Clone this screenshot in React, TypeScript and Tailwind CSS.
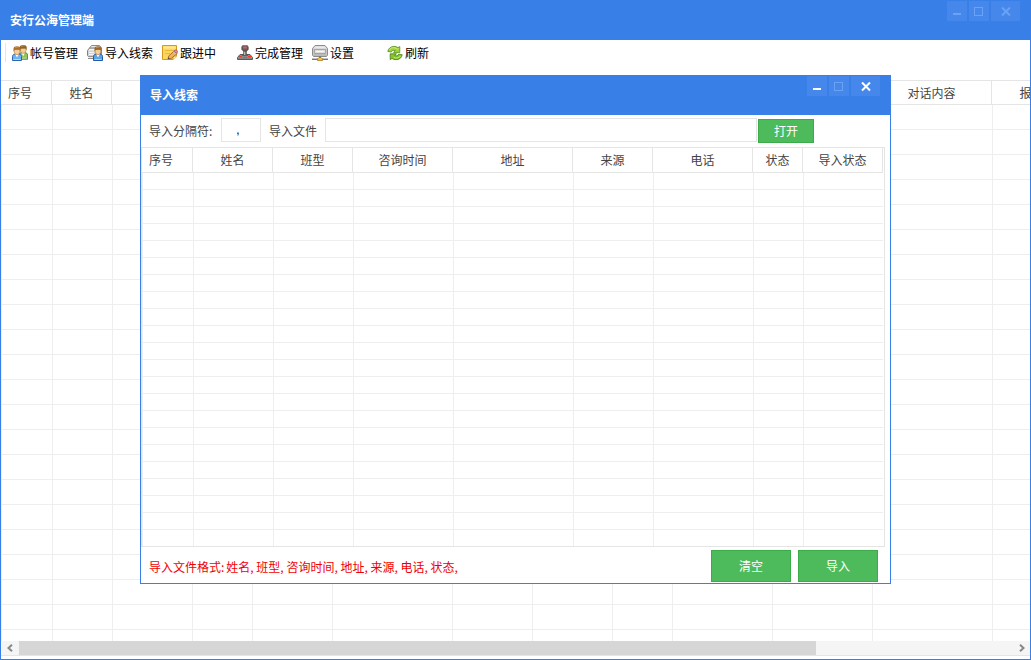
import type { ReactNode } from 'react'

type Column = { label: string; width: number }

const mainColumns: Column[] = [
  { label: '序号', width: 51 },
  { label: '姓名', width: 60 },
  { label: '', width: 80 },
  { label: '', width: 60 },
  { label: '', width: 80 },
  { label: '', width: 120 },
  { label: '', width: 80 },
  { label: '', width: 80 },
  { label: '', width: 60 },
  { label: '', width: 100 },
  { label: '', width: 100 },
  { label: '对话内容', width: 120 },
  { label: '报', width: 68 },
]

const importColumns: Column[] = [
  { label: '序号', width: 51 },
  { label: '姓名', width: 80 },
  { label: '班型', width: 80 },
  { label: '咨询时间', width: 100 },
  { label: '地址', width: 120 },
  { label: '来源', width: 80 },
  { label: '电话', width: 100 },
  { label: '状态', width: 50 },
  { label: '导入状态', width: 80 },
]

function Person({ shirt, edge, hair }: { shirt: string; edge: string; hair: string }) {
  return (
    <g>
      <path d="M.5 15.500v-4c0-1.500 1.200-2.300 2.500-2.500h4c1.300.2 2.500 1 2.500 2.500v4z" fill={shirt} stroke={edge} />
      <path d="M3.200 9h3.600L5 12.500z" fill="#fff" />
      <path d="M1.500 14.500h7" stroke="#fff" strokeOpacity=".5" />
      <path d="M2.200 4.500h5.600v2.700L6.400 9.500H3.600L2.200 7.200z" fill="#f5cd98" stroke="#b27b3c" strokeWidth=".6" />
      <path d="M1.500 6.500V3.600C1.700 2 3 1.300 5 1.300s3.300.7 3.500 2.300v2.900l-1-1.700H4.700L2.600 5z" fill={hair} />
      <path d="M3 3c.8-.8 2-.9 3.200-.7" fill="none" stroke="#d6a263" strokeWidth=".8" />
    </g>
  )
}

function AccountsIcon() {
  return (
    <svg viewBox="0 0 16 16" className="size-4 shrink-0" aria-hidden="true">
      <g transform="translate(6.200 -1.300)">
        <Person shirt="#8fc35c" edge="#4b8430" hair="#8f6222" />
      </g>
      <Person shirt="#6fb4f0" edge="#2a66ae" hair="#a8702c" />
    </svg>
  )
}

function ImportIcon() {
  return (
    <svg viewBox="0 0 16 16" className="size-4 shrink-0" aria-hidden="true">
      <path d="M4.500.5h8l2 2.500v6h-12V3z" fill="#e8e8e8" stroke="#8a8a8a" />
      <path d="M.5 5.500 2.500 3h9l2 2.500v6.200H1.500l-1-1z" fill="#d2d2d2" stroke="#808080" />
      <path d="M2.500 4h8l1 1.500h-10z" fill="#f4f4f4" />
      <path d="M2 7.500h5M2 9.500h5" stroke="#f4f4f4" />
      <path d="M1 13.500h5" stroke="#8a8a8a" />
      <g transform="translate(6 0)">
        <Person shirt="#5ba4ec" edge="#1f5aa6" hair="#9c6425" />
      </g>
    </svg>
  )
}

function NoteIcon() {
  return (
    <svg viewBox="0 0 16 16" className="size-4 shrink-0" aria-hidden="true">
      <path d="M.5.500h14v10.500l-3.500 3.500H.5z" fill="#ffd65c" stroke="#d6991f" />
      <path d="M1.500 1.500h12v2h-12z" fill="#ffe896" />
      <path d="M3 5.500h9M3 8.500h5" stroke="#e9b93f" />
      <path d="M11 14.500V11h3.500" fill="#fff2ba" stroke="#d6991f" />
      <path d="m6 14 .8-3.200 6-5.300 2.600 2.700-6 5.200z" fill="#f3b060" stroke="#94602b" strokeWidth=".8" />
      <path d="m12 6.200 1.300-1.200c1.400-.5 2.500.7 2.200 2l-1.300 1.400z" fill="#e88a87" stroke="#864e66" strokeWidth=".6" />
      <path d="m11.300 6.800 2.300 2.400" stroke="#b8c5dc" strokeWidth="1.200" />
      <path d="m6 14 .4-1.600 1.300 1.200z" fill="#333" />
    </svg>
  )
}

function JoystickIcon() {
  return (
    <svg viewBox="0 0 16 16" className="size-4 shrink-0" aria-hidden="true">
      <path d="M.5 12.500 3 9.500h10l2.500 3v2H.5z" fill="#a8a8a8" stroke="#5a5a5a" />
      <path d="M1 12.500h14v1.500H1z" fill="#858585" />
      <path d="M5.200 11c1-.8 1.500-3 1.500-5h2.600c0 2 .5 4.200 1.500 5z" fill="#6a6a6a" stroke="#444" strokeWidth=".6" />
      <path d="M7.700 6v4" stroke="#ccc" />
      <path d="M5.500.7h5l.7 1.300v2.600L9.500 6.200h-3L4.800 4.600V2z" fill="#6b5858" stroke="#4c4343" strokeWidth=".7" />
      <path d="M6.200 1.500h3.600v2H6.200z" fill="#c9665e" />
      <path d="M2 11.500h3M11 11.500h3" stroke="#ff3626" strokeWidth="2" />
      <path d="M5.500 12.500h5" stroke="#e0523f" />
    </svg>
  )
}

function DriveIcon() {
  return (
    <svg viewBox="0 0 16 16" className="size-4 shrink-0" aria-hidden="true">
      <path d="M3 .5h10l2.500 3v6.500l-1 1.500h-13L.5 10V3.500z" fill="#c9c9c9" stroke="#8c8c8c" />
      <path d="M3.200 1.200h9.600l1.700 2.300h-13z" fill="#e9e9e9" />
      <path d="M2.500 4.500h11v4h-11z" fill="#dedede" stroke="#a4a4a4" />
      <path d="M4 6.500h8" stroke="#f5f5f5" />
      <path d="M2 10h12" stroke="#adadad" />
      <path d="M8 11.500v1.500" stroke="#666" strokeWidth="2" />
      <path d="M0 13.500h16" stroke="#c4c4c4" />
      <path d="M0 14.500h16" stroke="#777" />
      <path d="M5.500 15.500v-1.500L7 12.500h2l1.500 1.500v1.500z" fill="#f8c43c" stroke="#9f7118" strokeWidth=".7" />
    </svg>
  )
}

function RefreshIcon() {
  return (
    <svg viewBox="0 0 16 16" className="size-4 shrink-0" aria-hidden="true">
      <path d="M.8 6.500C1.200 3.500 3.800 1.400 7 1.400c1.700 0 3 .5 4 1.200l1.800-1v6H6.500L8.300 5.700C6.500 4.900 5 5.300 4.400 7z" fill="#9fd334" stroke="#54901b" strokeWidth=".8" />
      <path d="M15.200 9.700c-.4 3-3 5-6.200 5-1.700 0-3-.5-4-1.200l-1.800 1.100V8.800h6.300l-1.800 1.700c1.800.8 3.300.4 3.900-1.300z" fill="#86c42a" stroke="#457d13" strokeWidth=".8" />
      <path d="M2.400 5c1-2 4-3.200 6.800-1.600l1.500.8 1-.6M13.500 10.800c-1 2-4 3-6.800 1.600" fill="none" stroke="#d9f38a" strokeWidth=".8" />
    </svg>
  )
}

const tools: { label: string; icon: ReactNode }[] = [
  { label: '帐号管理', icon: <AccountsIcon /> },
  { label: '导入线索', icon: <ImportIcon /> },
  { label: '跟进中', icon: <NoteIcon /> },
  { label: '完成管理', icon: <JoystickIcon /> },
  { label: '设置', icon: <DriveIcon /> },
  { label: '刷新', icon: <RefreshIcon /> },
]

function TitleBar({ title, active }: { title: string; active?: boolean }) {
  const glyph = active ? 'text-white' : 'text-[#6aa2f5]'
  return (
    <header className="flex h-[39px] shrink-0 items-start justify-between bg-[#3880e8] pr-2.5 pl-[9px]">
      <h1 className="text-xs leading-[38px] font-bold text-white">{title}</h1>
      <div className="flex gap-0.5">
        <button type="button" aria-label="最小化" className={`h-5 w-5 bg-[#4587eb] ${glyph}`}>
          <svg viewBox="0 0 20 20" className="size-5" shapeRendering="crispEdges">
            <path d="M6 13h8" stroke="currentColor" strokeWidth="2" />
          </svg>
        </button>
        <button type="button" aria-label="最大化" className="h-5 w-5 bg-[#4587eb] text-[#6aa2f5]">
          <svg viewBox="0 0 20 20" className="size-5" shapeRendering="crispEdges">
            <path d="M5.500 6.500h8v8h-8z" fill="none" stroke="currentColor" />
          </svg>
        </button>
        <button type="button" aria-label="关闭" className={`flex h-5 w-[29px] justify-center bg-[#4587eb] ${glyph}`}>
          <svg viewBox="0 0 20 20" className="size-5">
            <path d="m6 6.500 8 8m0-8-8 8" stroke="currentColor" strokeWidth="2" />
          </svg>
        </button>
      </div>
    </header>
  )
}

function Grid({ columns, rows, rowClass, headClass = '' }: { columns: Column[]; rows: number; rowClass: string; headClass?: string }) {
  const total = columns.reduce((sum, c) => sum + c.width, 0)
  return (
    <table className="table-fixed border-separate border-spacing-0 text-xs text-[#444]" style={{ width: total }}>
      <colgroup>
        {columns.map((c, i) => (
          <col key={i} style={{ width: c.width }} />
        ))}
      </colgroup>
      <thead>
        <tr className="h-[25px]">
          {columns.map((c, i) => (
            <th
              key={i}
              scope="col"
              className={`border-r border-b border-[#e5e5e5] p-0 leading-4 font-normal ${headClass} ${i === 0 ? 'pl-[7px] text-left' : 'text-center'}`}
            >
              {c.label}
            </th>
          ))}
        </tr>
      </thead>
      <tbody>
        {Array.from({ length: rows }, (_, r) => (
          <tr key={r} className={rowClass}>
            {columns.map((_, i) => (
              <td key={i} className="border-b border-l border-[#eee] p-0" />
            ))}
          </tr>
        ))}
      </tbody>
    </table>
  )
}

function ImportDialog() {
  const green = 'border border-[#3aac49] bg-[#4dbb5b] text-xs text-white'
  return (
    <section role="dialog" aria-label="导入线索" className="w-[751px] border border-[#3880e8] bg-white">
      <TitleBar title="导入线索" active />
      <div className="flex h-8 items-start pt-[3px] pl-2 text-xs text-[#444]">
        <label htmlFor="separator" className="w-[72px] leading-[26px]">
          导入分隔符:
        </label>
        <input
          id="separator"
          defaultValue=","
          className="h-6 w-10 border border-[#e5e5e5] pr-1.5 text-center font-['Liberation_Sans',sans-serif] text-black outline-none"
        />
        <label htmlFor="file" className="w-16 pl-2 leading-[26px]">
          导入文件
        </label>
        <input id="file" className="h-6 w-[432px] border border-[#e5e5e5] px-1 outline-none" />
        <button type="button" className={`mt-px ml-px h-6 w-14 ${green}`}>
          打开
        </button>
      </div>
      <div className="mr-[5px] h-[400px] overflow-hidden border border-[#e5e5e5]">
        <Grid columns={importColumns} rows={22} rowClass="h-[17px]" />
      </div>
      <footer className="flex h-9 items-start justify-between pt-[3px] pr-3 pl-2">
        <p className="flex gap-0.5 text-xs leading-[34px] text-[#f00000]">
          <span>导入文件格式:</span>
          <span>姓名, 班型, 咨询时间, 地址, 来源, 电话, 状态,</span>
        </p>
        <div className="flex gap-[7px]">
          <button type="button" className={`h-8 w-20 ${green}`}>
            清空
          </button>
          <button type="button" className={`h-8 w-20 ${green}`}>
            导入
          </button>
        </div>
      </footer>
    </section>
  )
}

function ScrollBar() {
  return (
    <div className="flex h-[15px] shrink-0 border-b border-[#e5e5e5] bg-[#f5f5f5] text-[#888]">
      <button type="button" aria-label="向左滚动" className="flex w-[18px] items-center justify-center">
        <svg viewBox="0 0 8 8" className="size-2">
          <path d="M6 .8 2.500 4 6 7.200" fill="none" stroke="currentColor" strokeWidth="2" />
        </svg>
      </button>
      <div className="flex-[797] bg-[#d6d6d6]" />
      <div className="flex-[196]" />
      <button type="button" aria-label="向右滚动" className="flex w-[18px] items-center justify-center">
        <svg viewBox="0 0 8 8" className="size-2">
          <path d="M3 .8 6.500 4 3 7.200" fill="none" stroke="currentColor" strokeWidth="2" />
        </svg>
      </button>
    </div>
  )
}

export default function App() {
  return (
    <main className="relative flex h-screen flex-col overflow-hidden border border-[#3880e8] bg-white pb-[3px] font-['Noto_Sans_CJK_SC','Liberation_Sans',sans-serif]">
      <TitleBar title="安行公海管理端" />
      <nav className="flex h-10 shrink-0 items-start pt-[3px] pl-1 text-xs text-black">
        <div className="mr-1.5 h-[19px] w-px bg-[#e5e5e5]" />
        {tools.map((tool) => (
          <button key={tool.label} type="button" className="flex h-[19px] w-[75px] items-center gap-0.5 text-left whitespace-nowrap">
            {tool.icon}
            {tool.label}
          </button>
        ))}
      </nav>
      <div className="min-h-0 flex-1 overflow-hidden">
        <Grid columns={mainColumns} rows={22} rowClass="h-[25px]" headClass="border-t" />
      </div>
      <ScrollBar />
      <div className="absolute inset-x-0 top-[74px] flex justify-center">
        <ImportDialog />
      </div>
    </main>
  )
}
